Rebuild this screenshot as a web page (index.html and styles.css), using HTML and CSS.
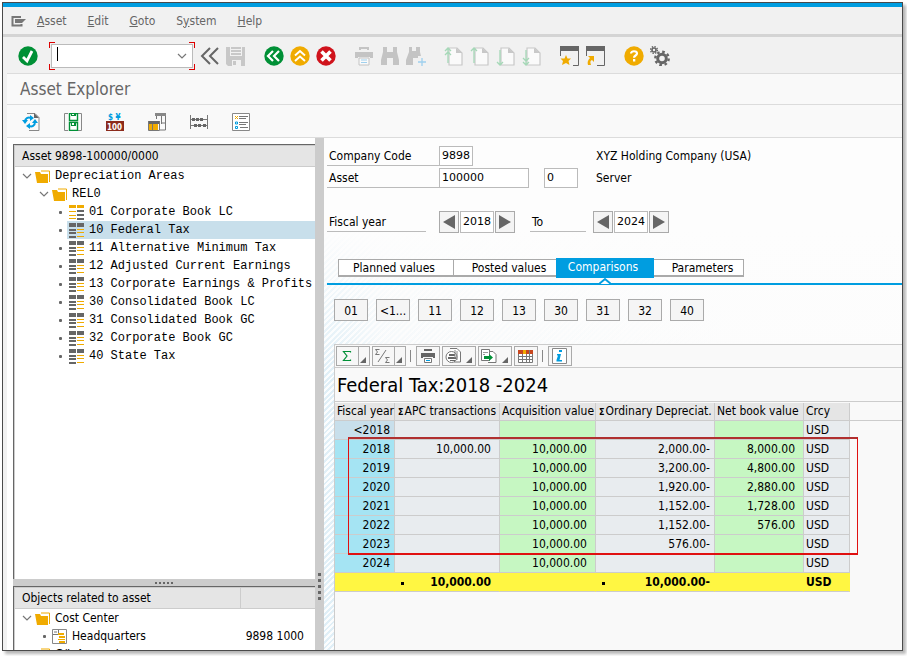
FILE: index.html
```html
<!DOCTYPE html>
<html lang="en">
<head>
  <meta charset="utf-8">
  <meta name="viewport" content="width=device-width, initial-scale=1">
  <title>Asset Explorer</title>
  <link rel="stylesheet" href="styles.css">
</head>
<body>
<svg class="defs" width="0" height="0">
  <symbol id="chev" viewBox="0 0 10 8"><path d="M1 2l4 4 4-4" fill="none" stroke="#777" stroke-width="1.2"/></symbol>
  <symbol id="folder" viewBox="0 0 15 13"><path d="M6 1h8.500v11" fill="none" stroke="#f0ab00"/><path d="M0 2h5l1 2h7v9H2z" fill="#f0ab00"/></symbol>
  <symbol id="area" viewBox="0 0 15 15"><path d="M0 0h7v4H0zM8 0h7v4H8zM0 6h7v2H0zM0 9h7v2H0zM0 13h7v2H0z" fill="#666"/><path d="M8 6h7v1H8zM8 9h7v1H8zM8 13h7v1H8z" fill="#f0ab00"/></symbol>
  <symbol id="area-main" viewBox="0 0 15 15"><path d="M0 0h7v3H0zM8 0h7v3H8zM0 6h7v1H0zM0 10h7v1H0zM0 13h7v1H0z" fill="#f0ab00"/><path d="M8 5h7v2H8zM8 9h7v2H8zM8 13h7v2H8z" fill="#666"/></symbol>
  <symbol id="page" viewBox="0 0 20 20"><path d="M5 2h8l5 5v12H5z" fill="#fafafa" stroke="#c8c8c8" stroke-width="1.2"/><path d="M12 2v5h6z" fill="#c8c8c8"/></symbol>
</svg>

<div class="window">
  <nav class="menubar">
    <svg width="15" height="12" viewBox="0 0 15 12"><path d="M10 2H1.500v8.500h9V9" fill="none" stroke="#777" stroke-width="2"/><path d="M4 4h11l-4 4H4z" fill="#777"/></svg>
    <a href="#"><u>A</u>sset</a>
    <a href="#"><u>E</u>dit</a>
    <a href="#"><u>G</u>oto</a>
    <a href="#">S<u>y</u>stem</a>
    <a href="#"><u>H</u>elp</a>
  </nav>

  <div class="toolbar">
    <button class="icon" aria-label="Enter"><svg viewBox="0 0 20 20"><circle cx="10" cy="10" r="9.700" fill="#009036"/><path d="M5 11l4 4 5-10" fill="none" stroke="#fff" stroke-width="2.800"/></svg></button>
    <div class="command">
      <i class="caret"></i>
      <input type="text" aria-label="Command">
      <button aria-label="History"><svg width="10" height="8"><use href="#chev"/></svg></button>
    </div>
    <div class="group">
      <button class="icon" aria-label="Collapse"><svg viewBox="0 0 20 20"><path d="M10 2l-8 8 8 8M18 2l-8 8 8 8" fill="none" stroke="#666" stroke-width="2"/></svg></button>
      <button class="icon" aria-label="Save"><svg viewBox="0 0 20 20"><path d="M0 1h19v19H2l-2-2z" fill="#c8c8c8"/><path d="M3 1h1v9h12V1h-1v8H5V1zM6 14h9v6H6z" fill="#f1f1f1"/><path d="M5 3.500h10M5 6.500h10" stroke="#f1f1f1"/><path d="M7 15h3v4H7z" fill="#c8c8c8"/></svg></button>
    </div>
    <div class="group">
      <button class="icon" aria-label="Back"><svg viewBox="0 0 20 20"><circle cx="10" cy="10" r="9.700" fill="#009036"/><path d="M9 5l-5 5 5 5M15 5l-5 5 5 5" fill="none" stroke="#fff" stroke-width="2.200"/></svg></button>
      <button class="icon" aria-label="Exit"><svg viewBox="0 0 20 20"><circle cx="10" cy="10" r="9.700" fill="#f0ab00"/><path d="M5 9.500l5-4.500 5 4.500M5 15l5-4.500 5 4.500" fill="none" stroke="#fff" stroke-width="1.900"/></svg></button>
      <button class="icon" aria-label="Cancel"><svg viewBox="0 0 20 20"><circle cx="10" cy="10" r="9.700" fill="#d0131c"/><path d="M5.500 5.500l9 9M14.500 5.500l-9 9" stroke="#fff" stroke-width="3.600"/></svg></button>
    </div>
    <div class="group">
      <button class="icon" aria-label="Print"><svg viewBox="0 0 20 20"><path d="M5 1h10v3h-2V3H7v1H5zM1 6h18v6h-3v-1H4v1H1z" fill="#c4c4c4"/><path d="M5 12h10v7H5z" fill="#fafafa" stroke="#c4c4c4"/><path d="M7 14h6M7 16.500h6" stroke="#9fd0ee"/></svg></button>
      <button class="icon" aria-label="Find"><svg viewBox="0 0 20 20"><path d="M3 1h4v5h6V1h4v5l2 8v5h-6v-7H7v7H1v-5l2-8z" fill="#c4c4c4"/></svg></button>
      <button class="icon" aria-label="Find next"><svg viewBox="0 0 20 20"><path d="M3 1h3v4h4V1h4v5l1 4h-3v2H7v7H0v-5l3-8z" fill="#c4c4c4"/><path d="M16 12v8M12 16h8" stroke="#9fd0ee" stroke-width="1.300"/></svg></button>
    </div>
    <div class="group">
      <button class="icon" aria-label="First page"><svg viewBox="0 0 20 20"><use href="#page"/><path d="M4 17V2M1 5l3-3 3 3M1 9l3-3 3 3" fill="none" stroke="#a5d8b7" stroke-width="1.300"/></svg></button>
      <button class="icon" aria-label="Previous page"><svg viewBox="0 0 20 20"><use href="#page"/><path d="M4 17V2M1 5l3-3 3 3" fill="none" stroke="#a5d8b7" stroke-width="1.300"/></svg></button>
      <button class="icon" aria-label="Next page"><svg viewBox="0 0 20 20"><use href="#page"/><path d="M4 4v15M1 16l3 3 3-3" fill="none" stroke="#a5d8b7" stroke-width="1.300"/></svg></button>
      <button class="icon" aria-label="Last page"><svg viewBox="0 0 20 20"><use href="#page"/><path d="M4 4v15M1 16l3 3 3-3M1 12l3 3 3-3" fill="none" stroke="#a5d8b7" stroke-width="1.300"/></svg></button>
    </div>
    <div class="group">
      <button class="icon" aria-label="New session"><svg viewBox="0 0 20 20"><path d="M0 0h19v5H0z" fill="#666"/><path d="M.5 5v5M18.500 5v14.500H13" fill="none" stroke="#666"/><path d="M6 9l1.500 3.500H11l-2.500 2.500 1 4L6 17l-4 2 1-4-2.500-2.500H4.500z" fill="#f0ab00"/></svg></button>
      <button class="icon" aria-label="Create shortcut"><svg viewBox="0 0 20 20"><path d="M0 0h19v5H0z" fill="#666"/><path d="M.5 5v5M18.500 5v14.500H11" fill="none" stroke="#666"/><path d="M2 10h6v6l-2-2c-2 1-2 2-1 5H2c-1-3 0-5 2-7z" fill="#f0ab00"/></svg></button>
    </div>
    <div class="group">
      <button class="icon" aria-label="Help"><svg viewBox="0 0 20 20"><circle cx="10" cy="10" r="9.700" fill="#f0ab00"/><path d="M7 7.500c0-3 6-3 6 0 0 2-3 2-3 4.200" fill="none" stroke="#fff" stroke-width="2.200"/><path d="M9 13h2.300v2.500H9z" fill="#fff"/></svg></button>
      <button class="icon" aria-label="Settings"><svg viewBox="0 0 20 20"><circle cx="12" cy="12.500" r="4.300" fill="none" stroke="#666" stroke-width="3"/><circle cx="12" cy="12.500" r="6.700" fill="none" stroke="#666" stroke-width="2.400" stroke-dasharray="2.600 2.660"/><circle cx="4" cy="4" r="2" fill="none" stroke="#666" stroke-width="1.600"/><circle cx="4" cy="4" r="3.400" fill="none" stroke="#666" stroke-width="1.400" stroke-dasharray="1.400 1.270"/></svg></button>
    </div>
  </div>

  <h1 class="title">Asset Explorer</h1>

  <div class="appbar">
    <button class="icon" aria-label="Refresh"><svg viewBox="0 0 18 18"><path d="M5 .5h8l4 4v13H7" fill="#fafafa" stroke="#888"/><path d="M12 0v5h5z" fill="#666"/><path d="M3 9c0-4 3-5 6-4M13 9c0 4-3 5-6 4" fill="none" stroke="#009de0" stroke-width="2"/><path d="M0 7h6l-3 4zM16 10h-6l3-4zM8 2l4 3-4 3zM8 10v6l-4-3z" fill="#009de0"/></svg></button>
    <button class="icon" aria-label="Select asset"><svg viewBox="0 0 18 18"><path d="M4 .5H.5v17H4M14 .5h3.500v17H14" fill="none" stroke="#888"/><path d="M5.500.5h8v7h-8zM5.500 9.500h8v8h-8z" fill="#fff" stroke="#009036" stroke-width="1.400"/><path d="M7 0h5v3H7zM7 9h5v4H7z" fill="#009036"/><path d="M8 1h2v1H8zM8 10h2v2H8z" fill="#fff"/></svg></button>
    <button class="icon" aria-label="Currency"><svg viewBox="0 0 18 18"><path d="M0 8h18v10H0z" fill="#8c2b1c"/><text x="1" y="17" class="ic-100">100</text><text x="2" y="7" class="ic-cur">$ ¥</text></svg></button>
    <button class="icon" aria-label="Origin of asset"><svg viewBox="0 0 18 18"><path d="M7 .5h10.500V17H12M8.500 3v3M13.500 3v8M17 10h-4" fill="none" stroke="#777"/><path d="M7 0h11v3H7z" fill="#888"/><path d="M0 8h12v3H0z" fill="#666"/><path d="M1 11h3v7H1zM5 11h5v7H5z" fill="#f0ab00"/><path d="M.5 8v9.500h11V8M4.500 11v7" fill="none" stroke="#777"/></svg></button>
    <button class="icon" aria-label="Calculate"><svg viewBox="0 0 18 18"><path d="M.5 2v14M17.500 2v14M0 6.500h18M0 12.500h18" stroke="#777"/><path d="M2 5h3v3H2zM6 5h3v3H6zM10 5h3v3h-3zM4 11h3v3H4zM8 11h3v3H8zM13 11h3v3h-3z" fill="#666"/></svg></button>
    <button class="icon" aria-label="Depreciation details"><svg viewBox="0 0 18 18"><path d="M.5.5h17v17H.5z" fill="#fff" stroke="#888"/><path d="M7 3.500h9M7 5.500h7M7 9.500h9M7 11.500h7M8 14.500h8" stroke="#777"/><path d="M3 3l3 3M6 3L3 6" stroke="#f0ab00"/><path d="M3.500 9h2v2h-2zM3.500 13.500h2v2h-2z" fill="#fff" stroke="#009de0"/></svg></button>
  </div>

  <main class="work">
    <aside class="side">
      <section class="panel tree">
        <h2>Asset 9898-100000/0000</h2>
        <ul>
          <li><svg class="tw"><use href="#chev"/></svg><svg class="fo"><use href="#folder"/></svg>Depreciation Areas</li>
          <li class="l2"><svg class="tw"><use href="#chev"/></svg><svg class="fo"><use href="#folder"/></svg>REL0</li>
          <li class="l3"><i class="dot"></i><span><svg class="ar"><use href="#area-main"/></svg>01 Corporate Book LC</span></li>
          <li class="l3 selected"><i class="dot"></i><span><svg class="ar"><use href="#area"/></svg>10 Federal Tax</span></li>
          <li class="l3"><i class="dot"></i><span><svg class="ar"><use href="#area"/></svg>11 Alternative Minimum Tax</span></li>
          <li class="l3"><i class="dot"></i><span><svg class="ar"><use href="#area"/></svg>12 Adjusted Current Earnings</span></li>
          <li class="l3"><i class="dot"></i><span><svg class="ar"><use href="#area"/></svg>13 Corporate Earnings &amp; Profits</span></li>
          <li class="l3"><i class="dot"></i><span><svg class="ar"><use href="#area"/></svg>30 Consolidated Book LC</span></li>
          <li class="l3"><i class="dot"></i><span><svg class="ar"><use href="#area"/></svg>31 Consolidated Book GC</span></li>
          <li class="l3"><i class="dot"></i><span><svg class="ar"><use href="#area"/></svg>32 Corporate Book GC</span></li>
          <li class="l3"><i class="dot"></i><span><svg class="ar"><use href="#area"/></svg>40 State Tax</span></li>
        </ul>
      </section>
      <div class="hsplit"><i></i><i></i><i></i><i></i><i></i></div>
      <section class="panel objects">
        <h2><span>Objects related to asset</span><span></span></h2>
        <ul>
          <li><svg class="tw"><use href="#chev"/></svg><svg class="fo"><use href="#folder"/></svg>Cost Center</li>
          <li class="l2"><i class="dot"></i><svg class="ar" viewBox="0 0 15 15"><path d="M.5.5h14v14H.5z" fill="#fff" stroke="#888"/><path d="M1 5.500h5M6.500 1v4M2 3h3" stroke="#777"/><path d="M6 4h6v2H6zM7 7h6v2H7zM6 10h7v1H6zM7 12h6v2H7z" fill="#f0ab00"/></svg><b>Headquarters</b><em>9898 1000</em></li>
          <li><svg class="tw"><use href="#chev"/></svg><svg class="fo"><use href="#folder"/></svg>G/L Account</li>
        </ul>
      </section>
    </aside>
    <div class="vsplit"><i></i><i></i><i></i><i></i><i></i></div>

    <section class="detail">
      <form class="header">
        <div class="row">
          <label class="key" for="bukrs">Company Code</label><input id="bukrs" class="w4" value="9898">
          <output class="desc far">XYZ Holding Company (USA)</output>
        </div>
        <div class="row">
          <label class="key" for="anln1">Asset</label><input id="anln1" class="w12" value="100000">
          <input class="w4 sub" aria-label="Sub-number" value="0">
          <output class="desc">Server</output>
        </div>
        <div class="row years">
          <label class="year" for="from">Fiscal year</label>
          <div class="spin"><button type="button" aria-label="Previous year"><svg width="12" height="14"><path d="M12 0v14L0 7z" fill="#666"/></svg></button><input id="from" class="w4" value="2018"><button type="button" aria-label="Next year"><svg width="12" height="14"><path d="M0 0v14l12-7z" fill="#666"/></svg></button></div>
          <label class="to" for="until">To</label>
          <div class="spin"><button type="button" aria-label="Previous end year"><svg width="12" height="14"><path d="M12 0v14L0 7z" fill="#666"/></svg></button><input id="until" class="w4" value="2024"><button type="button" aria-label="Next end year"><svg width="12" height="14"><path d="M0 0v14l12-7z" fill="#666"/></svg></button></div>
        </div>
      </form>

      <div class="tabs">
        <button>Planned values</button>
        <button>Posted values</button>
        <button class="active">Comparisons<svg width="12" height="8"><path d="M0 7l6-5 6 5" fill="#fff" stroke="#009de0" stroke-width="2"/></svg></button>
        <button>Parameters</button>
      </div>

      <div class="areas">
        <button>01</button><button>&lt;1...</button><button>11</button><button>12</button><button>13</button><button>30</button><button>31</button><button>32</button><button>40</button>
      </div>

      <div class="grid">
        <div class="gridbar">
          <button class="split" aria-label="Total"><svg width="12" height="14" viewBox="0 0 12 14"><path d="M9.500 3.500v-1H2.500L6 7l-3.500 4.500h7v-1" fill="none" stroke="#009036" stroke-width="1.200"/></svg><i></i></button>
          <button class="split" aria-label="Subtotals"><svg width="18" height="16" viewBox="0 0 18 16"><path d="M5.500 1.500h-4l2 2.500-2 2.500h4M15.500 9.500h-4l2 2.500-2 2.500h4M4 14L12 2" fill="none" stroke="#777"/></svg><i></i></button>
          <hr>
          <button aria-label="Print"><svg width="16" height="16" viewBox="0 0 16 16"><path d="M4 1h8v2H4zM1 5h14v5h-2V9H3v1H1z" fill="#666"/><path d="M4.500 10.500h7v4h-7z" fill="#fff" stroke="#777"/><path d="M6 12.500h4" stroke="#009de0"/></svg></button>
          <button class="menu" aria-label="Views"><svg width="17" height="16" viewBox="0 0 17 16"><path d="M5 .5h7l3.500 3.500v10H9" fill="#fff" stroke="#777"/><circle cx="6.500" cy="9" r="5.500" fill="#fff" stroke="#777"/><path d="M4 6h6v2H4zM3 9h8v2H3zM5 12h5v1H5z" fill="#666"/><path d="M10 2v8M12 3v9" stroke="#888"/></svg><i></i></button>
          <button class="menu" aria-label="Export"><svg width="16" height="14" viewBox="0 0 16 14"><path d="M.5.5h8v11h-8zM9 2.500h3l3 3v8H7" fill="#fff" stroke="#777"/><path d="M2 3.500h5M2 5.500h2" stroke="#999"/><path d="M3 7h5V5l4 3.500L8 12v-2H3z" fill="#009036"/></svg><i></i></button>
          <button aria-label="Layout"><svg width="16" height="13" viewBox="0 0 16 13"><path d="M.5.5h14v12H.5z" fill="#fff" stroke="#777"/><path d="M0 0h15v4H0z" fill="#c8461e"/><path d="M5 0h3v4H5z" fill="#f0ab00"/><path d="M0 6.500h15M0 9.500h15M4.500 4v9M8.500 4v9M11.500 0v13" stroke="#777"/></svg></button>
          <hr>
          <button aria-label="Information"><svg width="16" height="16" viewBox="0 0 16 16"><path d="M.5.5h14v15H.5z" fill="#fff" stroke="#888"/><path d="M7 2h3v2H7zM5 6h4l-1.500 6H10v1.500H4.500V12L6 7.500H5z" fill="#009de0"/></svg></button>
        </div>
        <h3>Federal Tax:2018 -2024</h3>
        <div class="tablewrap">
          <table>
            <colgroup><col class="c1"><col class="c2"><col class="c3"><col class="c4"><col class="c5"><col class="c6"></colgroup>
            <thead>
              <tr><th>Fiscal year</th><th><small>Σ</small>APC transactions</th><th>Acquisition value</th><th><small>Σ</small>Ordinary Depreciat.</th><th>Net book value</th><th>Crcy</th></tr>
            </thead>
            <tbody>
              <tr class="current"><td>&lt;2018</td><td></td><td></td><td></td><td></td><td>USD</td></tr>
              <tr><td>2018</td><td>10,000.00</td><td>10,000.00</td><td>2,000.00-</td><td>8,000.00</td><td>USD</td></tr>
              <tr><td>2019</td><td></td><td>10,000.00</td><td>3,200.00-</td><td>4,800.00</td><td>USD</td></tr>
              <tr><td>2020</td><td></td><td>10,000.00</td><td>1,920.00-</td><td>2,880.00</td><td>USD</td></tr>
              <tr><td>2021</td><td></td><td>10,000.00</td><td>1,152.00-</td><td>1,728.00</td><td>USD</td></tr>
              <tr><td>2022</td><td></td><td>10,000.00</td><td>1,152.00-</td><td>576.00</td><td>USD</td></tr>
              <tr><td>2023</td><td></td><td>10,000.00</td><td>576.00-</td><td></td><td>USD</td></tr>
              <tr><td>2024</td><td></td><td>10,000.00</td><td></td><td></td><td>USD</td></tr>
            </tbody>
            <tfoot>
              <tr><td></td><td><i class="mark"></i>10,000.00</td><td></td><td><i class="mark"></i>10,000.00-</td><td></td><td>USD</td></tr>
            </tfoot>
          </table>
          <div class="callout"></div>
        </div>
      </div>
    </section>
  </main>
</div>
</body>
</html>
```
FILE: styles.css
```css
* { box-sizing: border-box; }
body {
  margin: 0;
  height: 100vh;
  padding: 2px 4px 5px 2px;
  overflow: hidden;
  background: #fff;
  color: #000;
  font: 12px/18px "DejaVu Sans Condensed", "Noto Sans", sans-serif;
}
h1, h2, h3, ul { margin: 0; padding: 0; font-weight: normal; list-style: none; }
button, input { font: inherit; color: inherit; margin: 0; padding: 0; border-radius: 0; }
button { cursor: pointer; }
svg { display: block; flex: none; }
.defs { position: absolute; }

.window {
  display: flex;
  flex-direction: column;
  height: 100%;
  border: 1px solid #4a4a4a;
  box-shadow: 3px 3px 3px #b5b5b5;
  background: #f1f1f1;
  overflow: hidden;
}

/* menu and toolbars */
.menubar {
  display: flex;
  align-items: center;
  gap: 21px;
  height: 34px;
  flex: none;
  padding-left: 8px;
  border-top: 4px solid #009de0;
  border-bottom: 3px solid #d4d4d4;
}
.menubar svg { margin-right: -10px; }
.menubar a { color: #666; text-decoration: none; }
.toolbar {
  display: flex;
  align-items: center;
  gap: 18px;
  height: 37px;
  flex: none;
  margin-left: 4px;
  padding: 2px 0 0 11px;
  border-bottom: 1px solid #dcdcdc;
}
.group { display: flex; gap: 6px; }
.icon { border: 0; background: none; width: 20px; height: 20px; }
.icon svg { width: 100%; height: 100%; }
.command {
  display: flex;
  align-items: center;
  width: 146px;
  height: 28px;
  margin: 0 -13px 0 -7px;
  border: 2px solid transparent;
  background:
    linear-gradient(#fff, #fff) padding-box,
    linear-gradient(#d00, #d00) 0 0 / 6px 1px border-box,
    linear-gradient(#d00, #d00) 0 0 / 1px 6px border-box,
    linear-gradient(#d00, #d00) 100% 0 / 6px 1px border-box,
    linear-gradient(#d00, #d00) 100% 0 / 1px 6px border-box,
    linear-gradient(#d00, #d00) 0 100% / 6px 1px border-box,
    linear-gradient(#d00, #d00) 0 100% / 1px 6px border-box,
    linear-gradient(#d00, #d00) 100% 100% / 6px 1px border-box,
    linear-gradient(#d00, #d00) 100% 100% / 1px 6px border-box;
  background-repeat: no-repeat;
  box-shadow: inset 0 0 0 1px #bbb;
}
.command .caret { width: 1px; height: 14px; margin: -4px 0 0 6px; background: #000; }
.command input { flex: 1; min-width: 0; border: 0; outline: 0; background: none; }
.command button { border: 0; background: none; width: 22px; padding: 0 6px; }
.title {
  flex: none;
  height: 31px;
  margin-left: 4px;
  padding-left: 13px;
  background: #f9f9f9;
  border-bottom: 1px solid #dcdcdc;
  color: #666;
  font-size: 17px;
  line-height: 31px;
}
.appbar {
  display: flex;
  align-items: center;
  gap: 24px;
  flex: none;
  height: 33px;
  margin-left: 4px;
  padding: 2px 0 0 15px;
  background: #f9f9f9;
  border-bottom: 1px solid #dcdcdc;
}
.appbar .icon { width: 18px; height: 18px; }
.ic-100 { font: bold 8px "DejaVu Sans Condensed", sans-serif; fill: #fff; }
.ic-cur { font: bold 8px "DejaVu Sans Condensed", sans-serif; fill: #009de0; }

/* left side */
.work {
  display: grid;
  grid-template-columns: 308px 9px minmax(0, 1fr);
  flex: 1;
  min-height: 0;
  margin-left: 4px;
  background: #fff;
}
.side { display: flex; flex-direction: column; padding: 6px 0 0 6px; min-height: 0; }
.panel {
  border-top: 1px solid #666;
  border-left: 1px solid #666;
  box-shadow: inset 1px 1px #ccc;
  padding: 1px 0 0 1px;
  overflow: hidden;
  background: #fff;
}
.panel h2 {
  height: 21px;
  padding-left: 7px;
  background: #e5e5e5;
  border-bottom: 1px solid #ccc;
  font-size: 12px;
  line-height: 21px;
}
.tree { flex: 1; }
.tree ul { font-family: "Liberation Mono", monospace; }
.panel li {
  display: flex;
  align-items: center;
  height: 18px;
  padding-left: 7px;
  white-space: nowrap;
}
.panel li.l2 { padding-left: 24px; }
.panel li.l3 { padding-left: 44px; }
.panel li span { flex: 1; display: flex; align-items: center; height: 18px; padding-left: 2px; }
.selected span { background: #c8dfeb; }
.tw { width: 10px; height: 8px; margin-right: 3px; }
.fo { width: 15px; height: 13px; margin-right: 5px; }
.ar { width: 15px; height: 15px; margin-right: 5px; }
.dot { width: 3px; height: 3px; border-radius: 1px; background: #666; margin-right: 5px; }
.hsplit {
  display: flex;
  justify-content: center;
  align-items: center;
  gap: 2px;
  height: 7px;
  flex: none;
  background: #ccc;
}
.hsplit i { width: 2px; height: 2px; background: #666; }
.objects { flex: none; height: 64px; }
.objects h2 { display: flex; }
.objects h2 span:first-child { width: 219px; border-right: 1px solid #ccc; }
.objects .dot { margin: 0 6px 0 4px; }
.objects b, .objects em { font-weight: normal; font-style: normal; }
.objects em { margin-left: auto; padding-right: 11px; }
.vsplit {
  display: flex;
  flex-direction: column;
  align-items: center;
  justify-content: flex-end;
  gap: 3px;
  padding-bottom: 50px;
  background: #ccc;
}
.vsplit i { width: 3px; height: 3px; background: #666; }

/* right side */
.detail {
  display: flex;
  flex-direction: column;
  min-width: 0;
  padding: 8px 0 0 3px;
  background:
    linear-gradient(#fdfdfd 90px, rgba(253, 253, 253, 0) 240px),
    linear-gradient(to right, rgba(252, 252, 252, 0) 10px, rgba(252, 252, 252, .7) 60px, #fcfcfc 400px),
    repeating-linear-gradient(135deg, #e0eff7 0 2px, #fbfdfe 2px 4px);
}
.row { display: flex; height: 20px; margin-bottom: 2px; line-height: 20px; }
.row input {
  border: 1px solid #bbb;
  background: #fff;
  padding: 0 2px;
  font-family: "DejaVu Sans", sans-serif;
  font-size: 11px;
}
.key, .year, .to { padding-left: 2px; border-bottom: 1px solid #bbb; }
.key { width: 112px; }
.w4 { width: 34px; }
.w12 { width: 90px; }
.sub { margin-left: 15px; }
.desc { margin-left: 18px; }
.desc.far { margin-left: 123px; }
.years { height: 22px; margin: 23px 0 0; line-height: 22px; }
.years label { height: 21px; }
.year { width: 99px; margin-right: 13px; }
.to { width: 56px; margin: 0 7px 0 15px; }
.spin { display: flex; gap: 1px; }
.spin button {
  display: grid;
  place-items: center;
  width: 20px;
  border: 1px solid #aaa;
  background: #f4f4f4;
}
.tabs {
  display: flex;
  align-items: center;
  height: 29px;
  margin-top: 23px;
  padding: 0 0 4px 11px;
  border-bottom: 2px solid #009de0;
}
.tabs button {
  position: relative;
  height: 18px;
  width: 116px;
  margin-right: -1px;
  padding-right: 4px;
  border: 1px solid #aaa;
  border-bottom-width: 2px;
  background: #fff;
  line-height: 17px;
}
.tabs button:nth-child(2) { width: 104px; padding: 0 0 0 8px; }
.tabs button:nth-child(4) { width: 91px; padding: 0 0 0 8px; }
.tabs .active {
  z-index: 1;
  width: 98px;
  height: 20px;
  border: 0;
  background: #009de0;
  color: #fff;
}
.tabs .active svg { position: absolute; left: 43px; bottom: -7px; }
.areas { display: flex; gap: 8px; padding: 14px 0 0 7px; }
.areas button { width: 34px; height: 22px; padding-top: 1px; border: 1px solid #aaa; background: #f5f5f5; }

.grid {
  flex: 1;
  margin: 23px 0 0 7px;
  border-top: 1px solid #ccc;
  border-left: 1px solid #ccc;
  background: #f9f9f9;
}
.gridbar { display: flex; align-items: center; gap: 2px; height: 23px; padding-left: 1px; border-bottom: 1px solid #ccc; }
.gridbar button {
  display: flex;
  align-items: center;
  justify-content: center;
  height: 20px;
  width: 24px;
  border: 1px solid #aaa;
  background: #f7f7f7;
}
.gridbar .split, .gridbar .menu { position: relative; width: 34px; padding-right: 12px; }
.gridbar .split { background: linear-gradient(#aaa, #aaa) 21px 0 / 1px 100% no-repeat #f7f7f7; }
.gridbar i {
  position: absolute;
  right: 3px;
  bottom: 2px;
  border: 3px solid transparent;
  border-right-color: #666;
  border-bottom-color: #666;
}
.gridbar hr { width: 1px; height: 12px; margin: 0 3px 0 2px; border: 0; background: #888; }
.grid h3 { height: 34px; padding-left: 2px; border-bottom: 1px solid #ccc; font-size: 20px; line-height: 34px; white-space: nowrap; }
.tablewrap {
  position: relative;
  background: linear-gradient(#ccc, #ccc) 0 17px / 100% 1px no-repeat;
  margin-top: 1px;
}
table { table-layout: fixed; width: 515px; border-collapse: separate; border-spacing: 0; }
.c1 { width: 60px; }
.c2 { width: 105px; }
.c3 { width: 96px; }
.c4 { width: 119px; }
.c5 { width: 89px; }
.c6 { width: 46px; }
th, td {
  height: 19px;
  padding: 0 8px 0 2px;
  border: 1px solid #ccc;
  border-width: 0 1px 1px 0;
  background: #e8ecef;
  text-align: right;
  line-height: 17px;
  white-space: nowrap;
}
th { height: 18px; padding: 0 0 0 2px; background: #e5e5e5; font-weight: normal; text-align: left; }
th small { padding: 0 1px; font-size: 9px; font-weight: bold; line-height: 9px; }
td:nth-child(1) { padding-right: 4px; background: #a5e4f3; }
td:nth-child(3), td:nth-child(5) { background: #c6f7c2; }
td:nth-child(4) { padding-right: 4px; }
td:nth-child(6) { text-align: left; }
.current td:first-child { background: #c8dfeb; }
tfoot tr td, tfoot tr td:nth-child(n) { background: #fff642; border-right-color: #fff642; font-weight: bold; }
.mark { float: left; width: 3px; height: 3px; margin: 8px 0 0 4px; background: #000; }
/* frame around the years that carry depreciation */
.callout {
  position: absolute;
  left: 13px;
  top: 34px;
  width: 510px;
  height: 118px;
  border: 1px solid #e01010;
  border-bottom-width: 2px;
  border-top: 2px solid #b03030;
}
```
